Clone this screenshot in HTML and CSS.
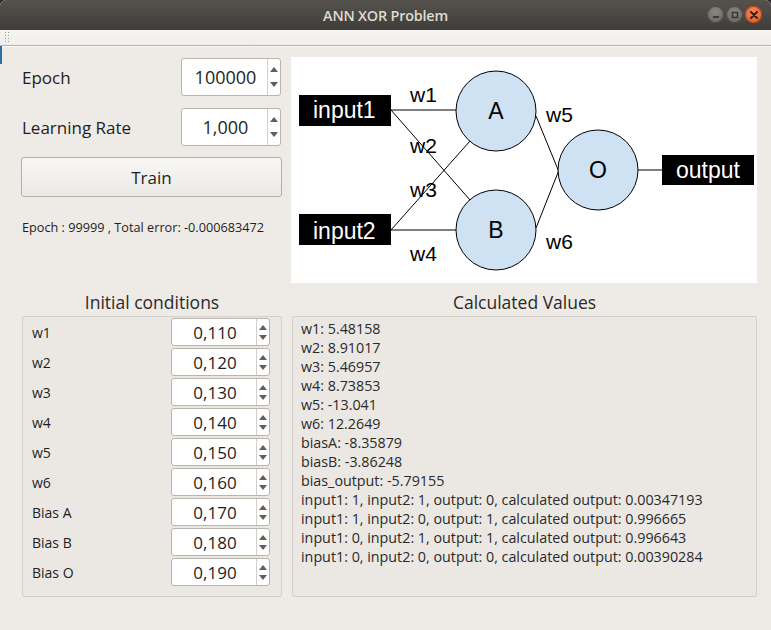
FILE: index.html
```html
<!DOCTYPE html>
<html>
<head>
<meta charset="utf-8">
<link rel="stylesheet" href="styles.css">
</head>
<body>
<div class="window">
  <div class="titlebar">
    <span class="title">ANN XOR Problem</span>
    <div class="wbtns">
      <span class="wbtn min"><svg width="14" height="14" viewBox="0 0 14 14"><rect x="4" y="8" width="6" height="2" fill="#3a3935"/></svg></span>
      <span class="wbtn max"><svg width="14" height="14" viewBox="0 0 14 14"><rect x="4.5" y="4.5" width="5" height="5" fill="none" stroke="#3a3935" stroke-width="1.6"/></svg></span>
      <span class="wbtn close"><svg width="14" height="14" viewBox="0 0 14 14"><path d="M4 4 L10 10 M10 4 L4 10" stroke="#3a2418" stroke-width="2.2" stroke-linecap="round"/></svg></span>
    </div>
  </div>
  <div class="toolbar"><span class="handle"></span></div>
  <div class="main">
    <span class="focusbar"></span>
    <div class="top">
      <div class="controls">
        <div class="row">
          <span class="lbl">Epoch</span>
          <div class="spin big"><span class="val">100000</span><span class="arrows"><i class="up"></i><i class="down"></i></span></div>
        </div>
        <div class="row">
          <span class="lbl">Learning Rate</span>
          <div class="spin big"><span class="val">1,000</span><span class="arrows"><i class="up"></i><i class="down"></i></span></div>
        </div>
        <button class="train">Train</button>
        <div class="status">Epoch : 99999 , Total error: -0.000683472</div>
      </div>
      <div class="diagram">
        <svg width="466" height="226" viewBox="0 0 466 226">
          <g stroke="#000" stroke-width="1">
            <line x1="100" y1="53" x2="165" y2="53"/>
            <line x1="100" y1="53" x2="179" y2="143"/>
            <line x1="100" y1="173" x2="179" y2="84"/>
            <line x1="100" y1="173" x2="165" y2="173"/>
            <line x1="245" y1="59" x2="268" y2="115"/>
            <line x1="245" y1="171" x2="268" y2="113"/>
            <line x1="347" y1="113" x2="371" y2="113"/>
          </g>
          <rect x="8" y="38" width="92" height="31" fill="#000"/>
          <rect x="8" y="157" width="92" height="31" fill="#000"/>
          <rect x="371" y="98" width="92" height="30" fill="#000"/>
          <g fill="#cfe2f3" stroke="#000" stroke-width="1">
            <circle cx="205" cy="54" r="40"/>
            <circle cx="205" cy="173" r="40"/>
            <circle cx="307" cy="113" r="40"/>
          </g>
          <g class="dtext" fill="#fff">
            <text x="22" y="61">input1</text>
            <text x="22" y="182">input2</text>
            <text x="385" y="121">output</text>
          </g>
          <g class="dtext" fill="#000" text-anchor="middle">
            <text x="205" y="62">A</text>
            <text x="205" y="181">B</text>
            <text x="307" y="121">O</text>
          </g>
          <g class="wtext" fill="#000">
            <text x="119" y="45">w1</text>
            <text x="119" y="96">w2</text>
            <text x="119" y="140">w3</text>
            <text x="119" y="204">w4</text>
            <text x="255" y="65">w5</text>
            <text x="255" y="192">w6</text>
          </g>
        </svg>
      </div>
    </div>
    <div class="bottom">
      <div class="col left">
        <div class="gtitle">Initial conditions</div>
        <div class="group init">
          <div class="prow"><span>w1</span><div class="spin small"><span class="val">0,110</span><span class="arrows"><i class="up"></i><i class="down"></i></span></div></div>
          <div class="prow"><span>w2</span><div class="spin small"><span class="val">0,120</span><span class="arrows"><i class="up"></i><i class="down"></i></span></div></div>
          <div class="prow"><span>w3</span><div class="spin small"><span class="val">0,130</span><span class="arrows"><i class="up"></i><i class="down"></i></span></div></div>
          <div class="prow"><span>w4</span><div class="spin small"><span class="val">0,140</span><span class="arrows"><i class="up"></i><i class="down"></i></span></div></div>
          <div class="prow"><span>w5</span><div class="spin small"><span class="val">0,150</span><span class="arrows"><i class="up"></i><i class="down"></i></span></div></div>
          <div class="prow"><span>w6</span><div class="spin small"><span class="val">0,160</span><span class="arrows"><i class="up"></i><i class="down"></i></span></div></div>
          <div class="prow"><span>Bias A</span><div class="spin small"><span class="val">0,170</span><span class="arrows"><i class="up"></i><i class="down"></i></span></div></div>
          <div class="prow"><span>Bias B</span><div class="spin small"><span class="val">0,180</span><span class="arrows"><i class="up"></i><i class="down"></i></span></div></div>
          <div class="prow"><span>Bias O</span><div class="spin small"><span class="val">0,190</span><span class="arrows"><i class="up"></i><i class="down"></i></span></div></div>
        </div>
      </div>
      <div class="col right">
        <div class="gtitle">Calculated Values</div>
        <div class="group results">
          <div>w1: 5.48158</div>
          <div>w2: 8.91017</div>
          <div>w3: 5.46957</div>
          <div>w4: 8.73853</div>
          <div>w5: -13.041</div>
          <div>w6: 12.2649</div>
          <div>biasA: -8.35879</div>
          <div>biasB: -3.86248</div>
          <div>bias_output: -5.79155</div>
          <div>input1: 1, input2: 1, output: 0, calculated output: 0.00347193</div>
          <div>input1: 1, input2: 0, output: 1, calculated output: 0.996665</div>
          <div>input1: 0, input2: 1, output: 1, calculated output: 0.996643</div>
          <div>input1: 0, input2: 0, output: 0, calculated output: 0.00390284</div>
        </div>
      </div>
    </div>
  </div>
</div>
</body>
</html>
```
FILE: styles.css
```css
* { box-sizing: border-box; }
html, body { margin: 0; padding: 0; background: #2b2b2b; }
body { font-family: "Open Sans", "Noto Sans", sans-serif; color: #3c3c3c; }
.window {
  width: 771px; height: 630px; background: #eeebe7;
  display: flex; flex-direction: column; overflow: hidden;
  border-radius: 6px 6px 0 0;
}
.titlebar {
  height: 30px; flex: none; position: relative;
  background: linear-gradient(#55524c, #3f3e3a);
  display: flex; align-items: center; justify-content: center;
}
.title { color: #dfdbd2; font-size: 14.4px; font-weight: 600; letter-spacing: -0.2px; }
.wbtns { position: absolute; right: 9px; top: 6px; display: flex; gap: 2px; }
.wbtn {
  width: 17px; height: 17px; border-radius: 50%;
  display: flex; align-items: center; justify-content: center;
}
.wbtn.min, .wbtn.max { background: radial-gradient(circle at 50% 35%, #8a8782, #64625d); box-shadow: inset 0 0 0 1px #4a4844; }
.wbtn.close { background: radial-gradient(circle at 50% 35%, #f7885c, #e5531f); box-shadow: inset 0 0 0 1px #b64418; }
.toolbar {
  height: 16px; flex: none; background: linear-gradient(#f6f5f3, #f0eeeb);
  border-bottom: 1px solid #b6b2ac; box-shadow: 0 1px 0 #f9f8f6;
  position: relative;
}
.handle {
  position: absolute; left: 4px; top: 1px; width: 6px; height: 13px;
  background-image: radial-gradient(circle, #9c9893 0.8px, transparent 1px);
  background-size: 3px 3px;
}
.main { flex: 1; position: relative; padding: 11px 14px 0 21px; }
.focusbar { position: absolute; left: 0; top: 0; width: 2px; height: 18px; background: #2e6ea6; }
.top { display: flex; gap: 9px; }
.controls { width: 261px; display: flex; flex-direction: column; padding-top: 1px; }
.row { display: flex; align-items: center; justify-content: space-between; height: 38px; margin-bottom: 12px; }
.row:nth-child(2) { margin-bottom: 11px; }
.lbl { font-size: 17px; color: #1e1e1e; padding-left: 1px; }
.spin {
  display: flex; background: #fff; border: 1px solid #b8b4ae; border-radius: 3px;
  width: 100px; color: #1e1e1e;
}
.spin.big { height: 38px; font-size: 18px; margin-right: 1px; }
.spin .val { flex: 1; display: flex; align-items: center; justify-content: center; padding-left: 2px; }
.spin .arrows {
  width: 13px; border-left: 1px solid #d2cfca; display: flex; flex-direction: column;
  justify-content: space-around; align-items: center; padding: 3px 0;
}
.spin .arrows i { width: 0; height: 0; border-left: 4px solid transparent; border-right: 4px solid transparent; }
.spin .arrows i.up { border-bottom: 5px solid #5f5f5f; }
.spin .arrows i.down { border-top: 5px solid #5f5f5f; }
.train {
  height: 40px; width: 261px; margin: 0; font-family: inherit; font-size: 17px; color: #1e1e1e;
  background: linear-gradient(#f8f7f6, #ebe9e6); border: 1px solid #b3afa9; border-radius: 3px;
}
.status { font-size: 12.7px; color: #1e1e1e; margin-top: 21px; padding-left: 1px; }
.diagram { width: 466px; height: 226px; background: #fff; }
.diagram svg { display: block; }
.dtext { font-family: "Liberation Sans", Arial, sans-serif; font-size: 23px; }
.wtext { font-family: "Liberation Sans", Arial, sans-serif; font-size: 21px; }
.bottom { display: flex; gap: 10px; margin-top: 9px; padding-left: 1px; }
.col { display: flex; flex-direction: column; }
.col.left { width: 260px; }
.col.right { width: 465px; }
.gtitle { text-align: center; font-size: 17.5px; height: 24px; line-height: 20px; color: #2a2a2a; }
.group {
  height: 281px; background: #ebe8e4; border: 1px solid #d3cfca; border-radius: 2px;
}
.init { padding: 1px 11px 0 9px; display: flex; flex-direction: column; gap: 2px; }
.prow { display: flex; align-items: center; justify-content: space-between; height: 28px; font-size: 14px; color: #1e1e1e; }
.spin.small { height: 28px; font-size: 17px; width: 99px; }
.results { padding: 2px 8px 0 8px; font-size: 14.3px; line-height: 19px; color: #2a2a2a; }
```
